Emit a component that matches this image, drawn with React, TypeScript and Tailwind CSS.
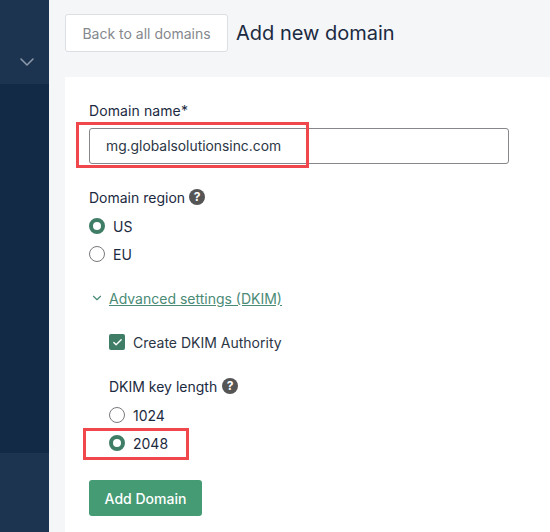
import { ChevronDown, Check } from "lucide-react";

function Help() {
  return (
    <span className="flex items-center justify-center w-4 h-4 rounded-full bg-[#555] text-white text-[12px] font-bold leading-none">
      ?
    </span>
  );
}

function Radio({ label, checked }: { label: string; checked?: boolean }) {
  return (
    <div className="flex items-center gap-2 h-7 text-[14px] text-[#1b2a41]">
      {checked ? (
        <span className="w-4 h-4 rounded-full border-[4px] border-[#3f7d66] bg-white" />
      ) : (
        <span className="w-4 h-4 rounded-full border border-[#77797d] bg-white" />
      )}
      <span>{label}</span>
    </div>
  );
}

export default function App() {
  return (
    <div className="relative flex w-[550px] h-[532px] overflow-hidden bg-[#f4f6f8] font-['Inter',sans-serif]">
      <aside className="flex flex-col w-[49px] shrink-0 bg-[#132a47]">
        <div className="flex items-center justify-center h-[84px] pt-[40px] pl-[5px] bg-[#1d3450] text-[#8d9bad]">
          <ChevronDown size={24} strokeWidth={1.5} />
        </div>
        <div className="flex-1" />
        <div className="h-[79px] bg-[#1d3450]" />
      </aside>

      <main className="flex-1 pl-[16px]">
        <div className="flex items-center gap-[8px] h-[77px] pb-[11px]">
          <button className="w-[163px] h-[38px] bg-white border border-[#dcdfe3] rounded-[3px] text-[14px] text-[#85888d]">
            Back to all domains
          </button>
          <h1 className="text-[20px] text-[#1b2a41]">Add new domain</h1>
        </div>

        <section className="bg-white h-[455px] pl-[24px] pt-[24px]">
          <label className="block text-[14px] leading-[20px] text-[#1b2a41] tracking-[0.1px]">Domain name*</label>
          <div className="flex items-center w-[420px] h-[36px] mt-[7px] pl-[16px] border border-[#85878b] rounded-[3px] text-[13.85px] text-[#2b3645]">
            mg.globalsolutionsinc.com
          </div>

          <div className="flex items-center gap-[4px] mt-[23px] h-[20px] text-[14px] text-[#1b2a41]">
            Domain region <Help />
          </div>
          <div className="mt-[5px]">
            <Radio label="US" checked />
            <Radio label="EU" />
          </div>

          <div className="flex items-center gap-[5px] mt-[20px] h-[20px] pl-[1px] text-[#4b8b76]">
            <ChevronDown size={14} strokeWidth={2} />
            <span className="text-[14px] underline">Advanced settings (DKIM)</span>
          </div>

          <div className="pl-[20px]">
            <div className="flex items-center gap-[8px] mt-[24px] h-[20px] text-[14px] text-[#2b3645]">
              <span className="flex items-center justify-center w-4 h-4 rounded-[2px] bg-[#3f7d66] text-white">
                <Check size={11} strokeWidth={3} />
              </span>
              Create DKIM Authority
            </div>
            <div className="flex items-center gap-[5px] mt-[24px] h-[20px] text-[14px] text-[#1b2a41]">
              DKIM key length <Help />
            </div>
            <div className="mt-[5px]">
              <Radio label="1024" />
              <Radio label="2048" checked />
            </div>
          </div>

          <button className="w-[113px] h-[36px] mt-[23px] bg-[#459b74] rounded-[3px] text-[14px] font-medium text-white">
            Add Domain
          </button>
        </section>
      </main>

      <div className="absolute left-[76px] top-[122px] w-[233px] h-[46px] border-[3px] border-[#f0474c]" />
      <div className="absolute left-[83px] top-[428px] w-[106px] h-[32px] border-[3px] border-[#f0474c]" />
    </div>
  );
}
